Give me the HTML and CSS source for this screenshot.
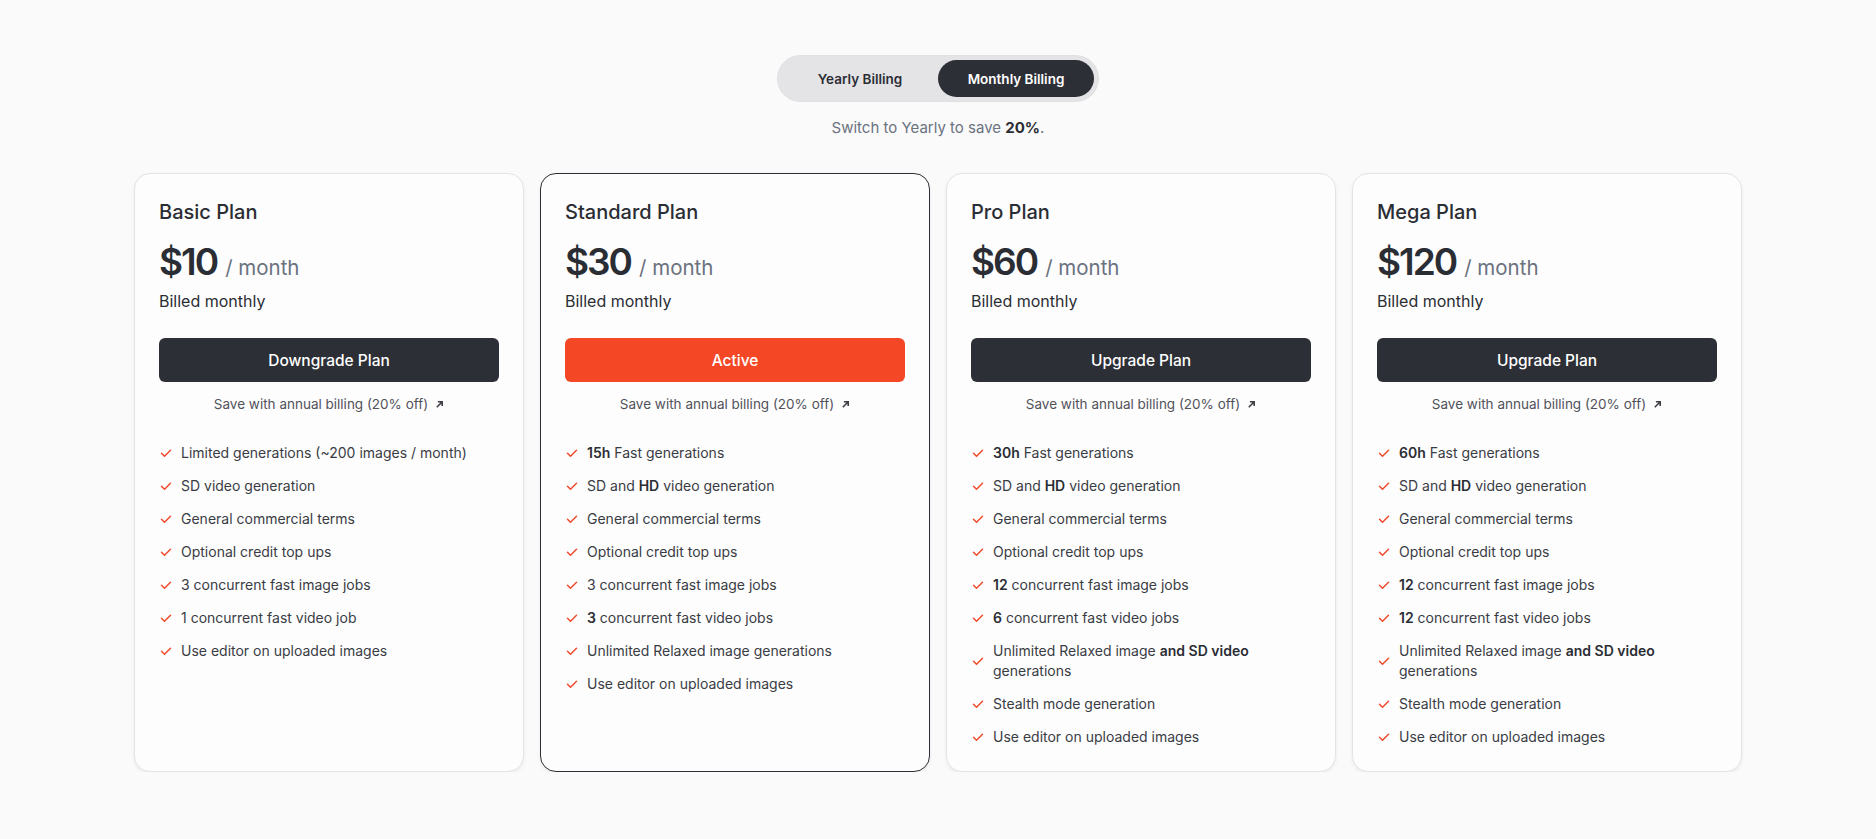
FILE: index.html
```html
<!DOCTYPE html>
<html lang="en">
<head>
<meta charset="utf-8">
<title>Pricing</title>
<link rel="stylesheet" href="styles.css">
</head>
<body>
<main class="page">
  <div class="toggle">
    <button class="toggle-btn">Yearly Billing</button>
    <button class="toggle-btn is-active">Monthly Billing</button>
  </div>
  <p class="save-note">Switch to Yearly to save <b>20%</b>.</p>

  <section class="plans">
    <article class="card">
      <h2 class="plan-name">Basic Plan</h2>
      <div class="price"><span class="amount">$10</span><span class="period">/ month</span></div>
      <p class="billed">Billed monthly</p>
      <button class="cta">Downgrade Plan</button>
      <a class="annual">Save with annual billing (20% off) <svg class="arrow" viewBox="0 0 10 10"><path d="M2 8L8 2M3.2 2H8V6.8"/></svg></a>
      <ul class="features">
        <li><svg class="check" viewBox="0 0 14 14"><path d="M2.5 7.2l3 3 6-6"/></svg><span>Limited generations (~200 images / month)</span></li>
        <li><svg class="check" viewBox="0 0 14 14"><path d="M2.5 7.2l3 3 6-6"/></svg><span>SD video generation</span></li>
        <li><svg class="check" viewBox="0 0 14 14"><path d="M2.5 7.2l3 3 6-6"/></svg><span>General commercial terms</span></li>
        <li><svg class="check" viewBox="0 0 14 14"><path d="M2.5 7.2l3 3 6-6"/></svg><span>Optional credit top ups</span></li>
        <li><svg class="check" viewBox="0 0 14 14"><path d="M2.5 7.2l3 3 6-6"/></svg><span>3 concurrent fast image jobs</span></li>
        <li><svg class="check" viewBox="0 0 14 14"><path d="M2.5 7.2l3 3 6-6"/></svg><span>1 concurrent fast video job</span></li>
        <li><svg class="check" viewBox="0 0 14 14"><path d="M2.5 7.2l3 3 6-6"/></svg><span>Use editor on uploaded images</span></li>
      </ul>
    </article>

    <article class="card is-current">
      <h2 class="plan-name">Standard Plan</h2>
      <div class="price"><span class="amount">$30</span><span class="period">/ month</span></div>
      <p class="billed">Billed monthly</p>
      <button class="cta cta-active">Active</button>
      <a class="annual">Save with annual billing (20% off) <svg class="arrow" viewBox="0 0 10 10"><path d="M2 8L8 2M3.2 2H8V6.8"/></svg></a>
      <ul class="features">
        <li><svg class="check" viewBox="0 0 14 14"><path d="M2.5 7.2l3 3 6-6"/></svg><span><b>15h</b> Fast generations</span></li>
        <li><svg class="check" viewBox="0 0 14 14"><path d="M2.5 7.2l3 3 6-6"/></svg><span>SD and <b>HD</b> video generation</span></li>
        <li><svg class="check" viewBox="0 0 14 14"><path d="M2.5 7.2l3 3 6-6"/></svg><span>General commercial terms</span></li>
        <li><svg class="check" viewBox="0 0 14 14"><path d="M2.5 7.2l3 3 6-6"/></svg><span>Optional credit top ups</span></li>
        <li><svg class="check" viewBox="0 0 14 14"><path d="M2.5 7.2l3 3 6-6"/></svg><span>3 concurrent fast image jobs</span></li>
        <li><svg class="check" viewBox="0 0 14 14"><path d="M2.5 7.2l3 3 6-6"/></svg><span><b>3</b> concurrent fast video jobs</span></li>
        <li><svg class="check" viewBox="0 0 14 14"><path d="M2.5 7.2l3 3 6-6"/></svg><span>Unlimited Relaxed image generations</span></li>
        <li><svg class="check" viewBox="0 0 14 14"><path d="M2.5 7.2l3 3 6-6"/></svg><span>Use editor on uploaded images</span></li>
      </ul>
    </article>

    <article class="card">
      <h2 class="plan-name">Pro Plan</h2>
      <div class="price"><span class="amount">$60</span><span class="period">/ month</span></div>
      <p class="billed">Billed monthly</p>
      <button class="cta">Upgrade Plan</button>
      <a class="annual">Save with annual billing (20% off) <svg class="arrow" viewBox="0 0 10 10"><path d="M2 8L8 2M3.2 2H8V6.8"/></svg></a>
      <ul class="features">
        <li><svg class="check" viewBox="0 0 14 14"><path d="M2.5 7.2l3 3 6-6"/></svg><span><b>30h</b> Fast generations</span></li>
        <li><svg class="check" viewBox="0 0 14 14"><path d="M2.5 7.2l3 3 6-6"/></svg><span>SD and <b>HD</b> video generation</span></li>
        <li><svg class="check" viewBox="0 0 14 14"><path d="M2.5 7.2l3 3 6-6"/></svg><span>General commercial terms</span></li>
        <li><svg class="check" viewBox="0 0 14 14"><path d="M2.5 7.2l3 3 6-6"/></svg><span>Optional credit top ups</span></li>
        <li><svg class="check" viewBox="0 0 14 14"><path d="M2.5 7.2l3 3 6-6"/></svg><span><b>12</b> concurrent fast image jobs</span></li>
        <li><svg class="check" viewBox="0 0 14 14"><path d="M2.5 7.2l3 3 6-6"/></svg><span><b>6</b> concurrent fast video jobs</span></li>
        <li><svg class="check" viewBox="0 0 14 14"><path d="M2.5 7.2l3 3 6-6"/></svg><span>Unlimited Relaxed image <b>and SD video</b><br>generations</span></li>
        <li><svg class="check" viewBox="0 0 14 14"><path d="M2.5 7.2l3 3 6-6"/></svg><span>Stealth mode generation</span></li>
        <li><svg class="check" viewBox="0 0 14 14"><path d="M2.5 7.2l3 3 6-6"/></svg><span>Use editor on uploaded images</span></li>
      </ul>
    </article>

    <article class="card">
      <h2 class="plan-name">Mega Plan</h2>
      <div class="price"><span class="amount">$120</span><span class="period">/ month</span></div>
      <p class="billed">Billed monthly</p>
      <button class="cta">Upgrade Plan</button>
      <a class="annual">Save with annual billing (20% off) <svg class="arrow" viewBox="0 0 10 10"><path d="M2 8L8 2M3.2 2H8V6.8"/></svg></a>
      <ul class="features">
        <li><svg class="check" viewBox="0 0 14 14"><path d="M2.5 7.2l3 3 6-6"/></svg><span><b>60h</b> Fast generations</span></li>
        <li><svg class="check" viewBox="0 0 14 14"><path d="M2.5 7.2l3 3 6-6"/></svg><span>SD and <b>HD</b> video generation</span></li>
        <li><svg class="check" viewBox="0 0 14 14"><path d="M2.5 7.2l3 3 6-6"/></svg><span>General commercial terms</span></li>
        <li><svg class="check" viewBox="0 0 14 14"><path d="M2.5 7.2l3 3 6-6"/></svg><span>Optional credit top ups</span></li>
        <li><svg class="check" viewBox="0 0 14 14"><path d="M2.5 7.2l3 3 6-6"/></svg><span><b>12</b> concurrent fast image jobs</span></li>
        <li><svg class="check" viewBox="0 0 14 14"><path d="M2.5 7.2l3 3 6-6"/></svg><span><b>12</b> concurrent fast video jobs</span></li>
        <li><svg class="check" viewBox="0 0 14 14"><path d="M2.5 7.2l3 3 6-6"/></svg><span>Unlimited Relaxed image <b>and SD video</b><br>generations</span></li>
        <li><svg class="check" viewBox="0 0 14 14"><path d="M2.5 7.2l3 3 6-6"/></svg><span>Stealth mode generation</span></li>
        <li><svg class="check" viewBox="0 0 14 14"><path d="M2.5 7.2l3 3 6-6"/></svg><span>Use editor on uploaded images</span></li>
      </ul>
    </article>
  </section>
</main>
</body>
</html>
```

FILE: styles.css
```css
* { box-sizing: border-box; }

html, body {
  margin: 0;
  background: #fafafa;
}

body {
  font-family: Inter, "Noto Sans", "Liberation Sans", sans-serif;
  color: #2b2d34;
}

.page {
  display: flex;
  flex-direction: column;
  align-items: center;
  padding-top: 56px;
}

.toggle {
  display: inline-flex;
  padding: 4px;
  background: #e4e4e7;
  border-radius: 999px;
  box-shadow: 0 0 0 1px #e0e0e4;
}

.toggle-btn {
  width: 156px;
  height: 37px;
  border: 0;
  border-radius: 999px;
  background: transparent;
  font-family: inherit;
  font-size: 13.5px;
  font-weight: 600;
  color: #2b2d34;
  cursor: pointer;
}

.toggle-btn.is-active {
  background: #2d2f36;
  color: #ffffff;
}

.save-note {
  margin: 15px 0 0;
  font-size: 15px;
  line-height: 24px;
  color: #6b7280;
}

.save-note b {
  color: #2b2d34;
  font-weight: 700;
}

.plans {
  display: grid;
  grid-template-columns: repeat(4, 1fr);
  gap: 16px;
  width: 1608px;
  margin-top: 33px;
}

.card {
  display: flex;
  flex-direction: column;
  padding: 24px;
  background: #fdfdfd;
  border: 1px solid #e4e4e7;
  border-radius: 16px;
  box-shadow: 0 2px 4px rgba(0, 0, 0, 0.06);
}

.card.is-current {
  border-color: #2d2f36;
}

.plan-name {
  margin: 0;
  font-size: 20px;
  line-height: 28px;
  font-weight: 500;
  color: #2b2d34;
}

.price {
  display: flex;
  align-items: baseline;
  height: 40px;
  margin-top: 16px;
}

.amount {
  font-size: 37px;
  line-height: 40px;
  font-weight: 600;
  letter-spacing: -2px;
  color: #2b2d34;
}

.period {
  margin-left: 8px;
  font-size: 20.5px;
  line-height: 1;
  color: #6b7280;
}

.billed {
  margin: 7px 0 0;
  font-size: 16px;
  line-height: 24px;
  color: #2b2d34;
}

.cta {
  margin-top: 25px;
  height: 44px;
  border: 0;
  border-radius: 6px;
  background: #2d2f36;
  color: #ffffff;
  font-family: inherit;
  font-size: 15.5px;
  font-weight: 500;
  cursor: pointer;
}

.cta-active {
  background: #f44725;
}

.annual {
  display: flex;
  justify-content: center;
  align-items: center;
  gap: 7px;
  margin-top: 12px;
  font-size: 13.5px;
  line-height: 20px;
  color: #52525b;
}

.arrow {
  width: 9px;
  height: 9px;
  fill: none;
  stroke: #3f3f46;
  stroke-width: 1.8;
}

.features {
  list-style: none;
  margin: 29px 0 0;
  padding: 0;
  display: flex;
  flex-direction: column;
  gap: 13px;
}

.features li {
  display: flex;
  align-items: center;
  gap: 8px;
  font-size: 14px;
  line-height: 20px;
  color: #3a3c44;
}

.features b {
  font-weight: 600;
  color: #2b2d34;
}

.check {
  flex: none;
  width: 14px;
  height: 14px;
  fill: none;
  stroke: #f04a2b;
  stroke-width: 1.5;
  stroke-linecap: round;
  stroke-linejoin: round;
}
```
